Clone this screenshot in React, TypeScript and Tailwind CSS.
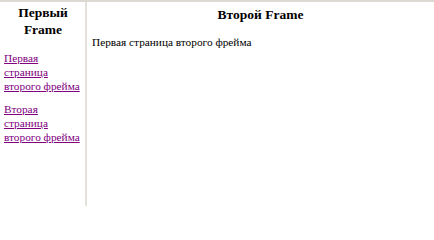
export default function App() {
  const linkClass = "text-[#800080] underline decoration-1 underline-offset-1";

  return (
    <div className="flex h-[206px] w-[434px] flex-col bg-white font-['Liberation_Serif',serif] text-[11.3px] leading-[14px] text-black">
      <div className="h-[2px] bg-[#dcd9d2]" />
      <div className="flex flex-1">
        <aside className="w-[85px] shrink-0 pl-[4px] pr-[3px]">
          <h3 className="mt-[2px] text-center text-[13.5px] font-bold leading-[17px]">
            Первый Frame
          </h3>
          <p className="mt-[13px]">
            <a href="#" className={linkClass}>
              Первая страница второго фрейма
            </a>
          </p>
          <p className="mt-[9px]">
            <a href="#" className={linkClass}>
              Вторая страница второго фрейма
            </a>
          </p>
        </aside>
        <div className="w-[2px] shrink-0 bg-[#e4e1da]" />
        <main className="flex-1 px-[5px]">
          <h3 className="mt-[4px] text-center text-[13.5px] font-bold leading-[17px]">
            Второй Frame
          </h3>
          <p className="mt-[12px]">Первая страница второго фрейма</p>
        </main>
      </div>
    </div>
  );
}
